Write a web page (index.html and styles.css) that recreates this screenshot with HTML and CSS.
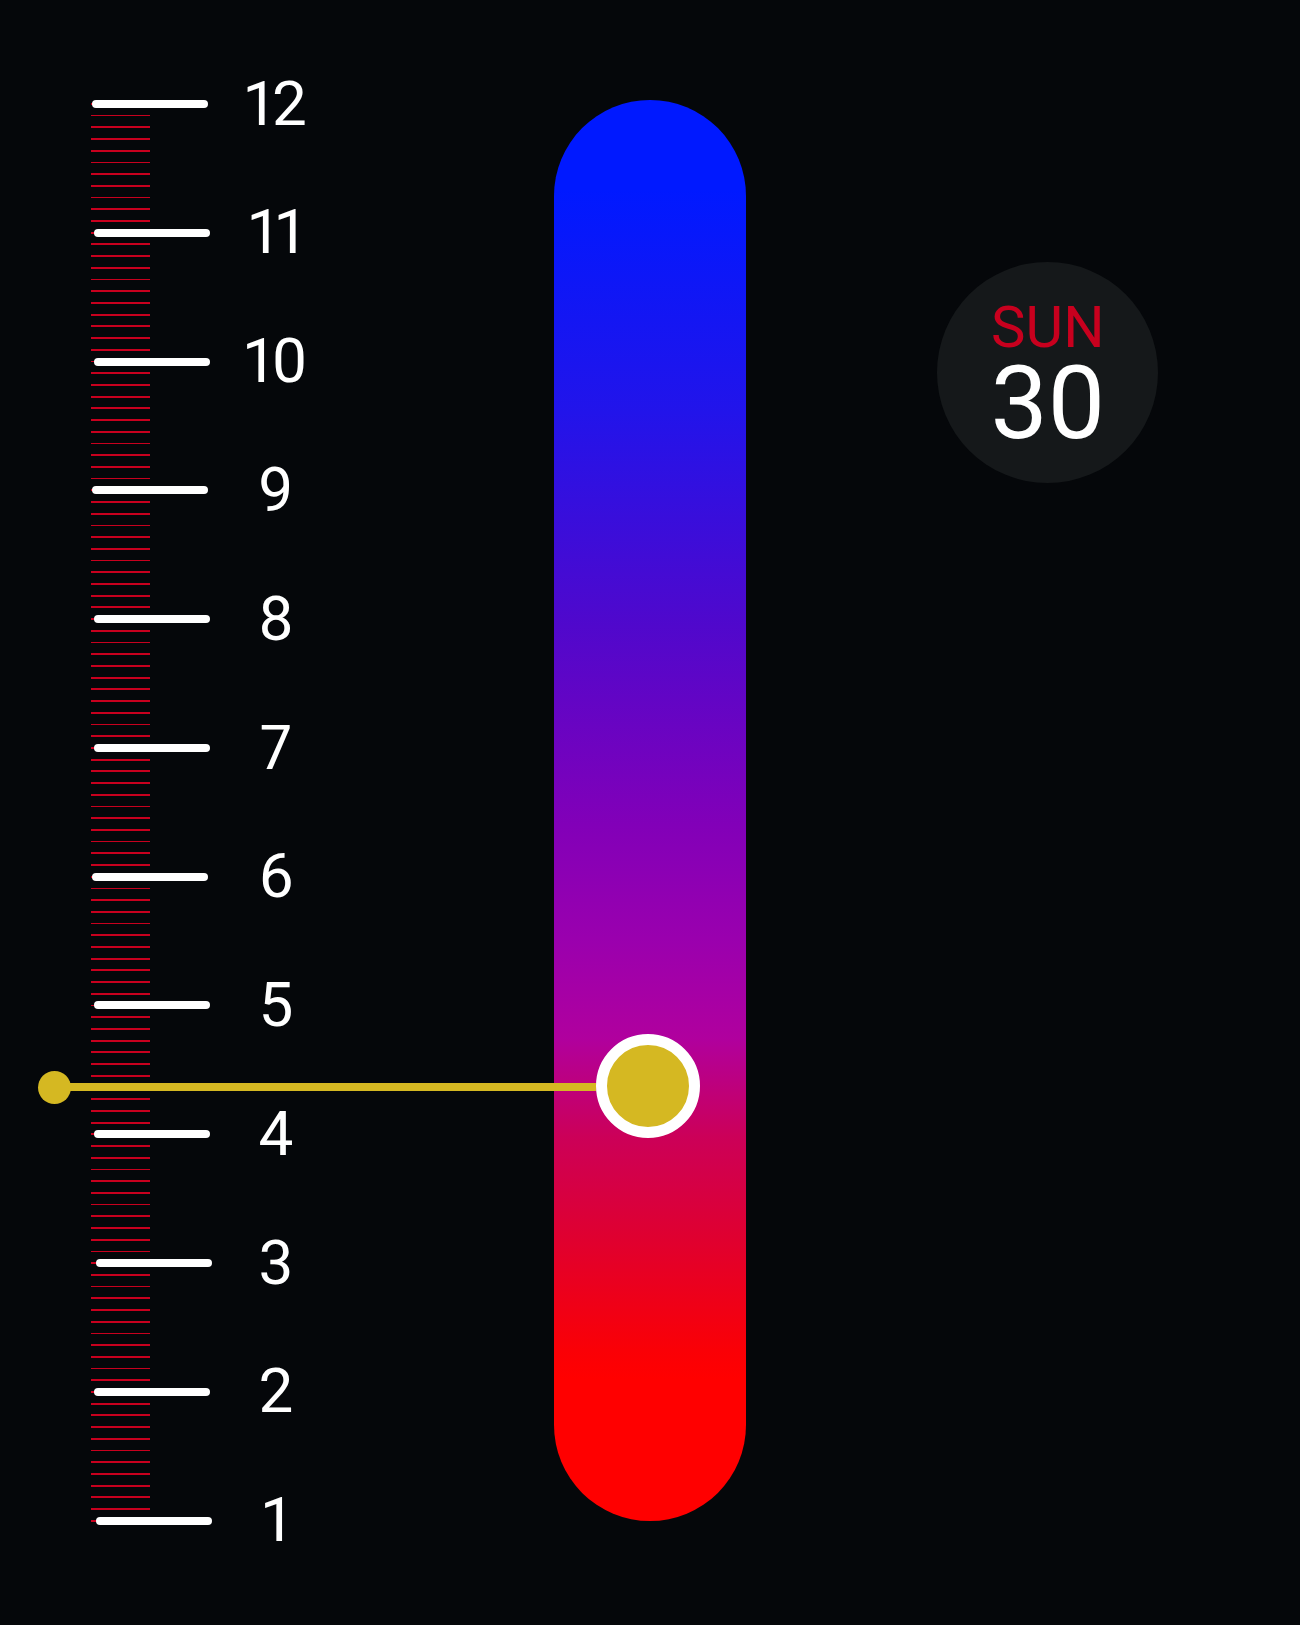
FILE: index.html
```html
<!DOCTYPE html>
<html lang="en">
<head>
<meta charset="utf-8">
<title>Timeline</title>
<link rel="stylesheet" href="styles.css">
</head>
<body>
<main class="stage">
  <section class="ruler">
    <div class="mark"><span class="bar m0"></span><span class="num">12</span></div>
    <div class="mark"><span class="bar m2"></span><span class="num">11</span></div>
    <div class="mark"><span class="bar m2"></span><span class="num">10</span></div>
    <div class="mark"><span class="bar m0"></span><span class="num">9</span></div>
    <div class="mark"><span class="bar m2"></span><span class="num">8</span></div>
    <div class="mark"><span class="bar m2"></span><span class="num">7</span></div>
    <div class="mark"><span class="bar m0"></span><span class="num">6</span></div>
    <div class="mark"><span class="bar m2"></span><span class="num">5</span></div>
    <div class="mark"><span class="bar m2"></span><span class="num">4</span></div>
    <div class="mark"><span class="bar m4"></span><span class="num">3</span></div>
    <div class="mark"><span class="bar m2"></span><span class="num">2</span></div>
    <div class="mark"><span class="bar m4"></span><span class="num">1</span></div>
  </section>
  <div class="pill"></div>
  <div class="badge">
    <div class="day">SUN</div>
    <div class="date">30</div>
  </div>
  <div class="indicator">
    <span class="dot"></span>
    <span class="line"></span>
    <span class="knob"></span>
  </div>
</main>
</body>
</html>
```
FILE: styles.css
```css
html, body {
  margin: 0;
  padding: 0;
  background: #05070a;
}
body {
  width: 1300px;
  height: 1625px;
  overflow: hidden;
  font-family: Roboto, "Liberation Sans", Arial, sans-serif;
}
.stage {
  position: relative;
  display: flex;
  align-items: flex-start;
  padding-left: 91px;
  height: 1625px;
  box-sizing: border-box;
}
.ruler {
  margin-top: 98.15px;
  width: 225px;
  height: 1428.4px;
  display: flex;
  flex-direction: column;
  justify-content: space-between;
  background-image: repeating-linear-gradient(to bottom,
    transparent 0px, transparent 4.95px,
    #c8001e 4.95px, #c8001e 6.75px,
    transparent 6.75px, transparent 11.71px);
  background-size: 59px 100%;
  background-repeat: no-repeat;
  background-position: left top;
}
.mark {
  height: 11.71px;
  display: grid;
  grid-template-columns: 145px 80px;
  align-items: center;
}
.bar {
  display: block;
  width: 116px;
  height: 8px;
  border-radius: 4px;
  background: #ffffff;
}
.m0 { margin-left: 1px; }
.m2 { margin-left: 3px; }
.m4 { margin-left: 5px; }
.num {
  color: #ffffff;
  font-size: 62px;
  line-height: 11.71px;
  text-align: center;
  margin-top: -1px;
  white-space: nowrap;
  font-variant-numeric: proportional-nums;
}
.pill {
  flex: none;
  margin-left: 238px;
  margin-top: 100px;
  width: 192px;
  height: 1421px;
  border-radius: 96px;
  background: linear-gradient(to bottom,
    #0019ff 0%,
    #0019ff 6.3%,
    #2214ea 22%,
    #5008cc 37%,
    #8200b8 51%,
    #9a00ae 59%,
    #b0009e 66%,
    #cc0058 73%,
    #df0030 80%,
    #fa0006 88%,
    #ff0000 90%,
    #ff0000 100%);
}
.badge {
  flex: none;
  margin-left: 191.3px;
  margin-top: 262.3px;
  width: 221px;
  height: 221px;
  border-radius: 50%;
  background: #15181a;
  box-sizing: border-box;
  padding-top: 41.6px;
  text-align: center;
}
.day {
  color: #c8001e;
  font-size: 58px;
  line-height: 46px;
}
.date {
  color: #ffffff;
  font-size: 102px;
  line-height: 84px;
  margin-top: 11.5px;
}
.indicator {
  position: absolute;
  left: 37.5px;
  top: 1034px;
  width: 662.5px;
  height: 104px;
  display: flex;
  align-items: center;
}
.dot {
  flex: none;
  width: 33px;
  height: 33px;
  border-radius: 50%;
  background: #d5b822;
  margin-top: 2px;
}
.line {
  flex: 1;
  height: 8px;
  background: #d5b822;
  margin-top: 2px;
  margin-left: -2px;
}
.knob {
  flex: none;
  width: 104px;
  height: 104px;
  border-radius: 50%;
  box-sizing: border-box;
  border: 11.5px solid #ffffff;
  background: #d5b822;
}
```
